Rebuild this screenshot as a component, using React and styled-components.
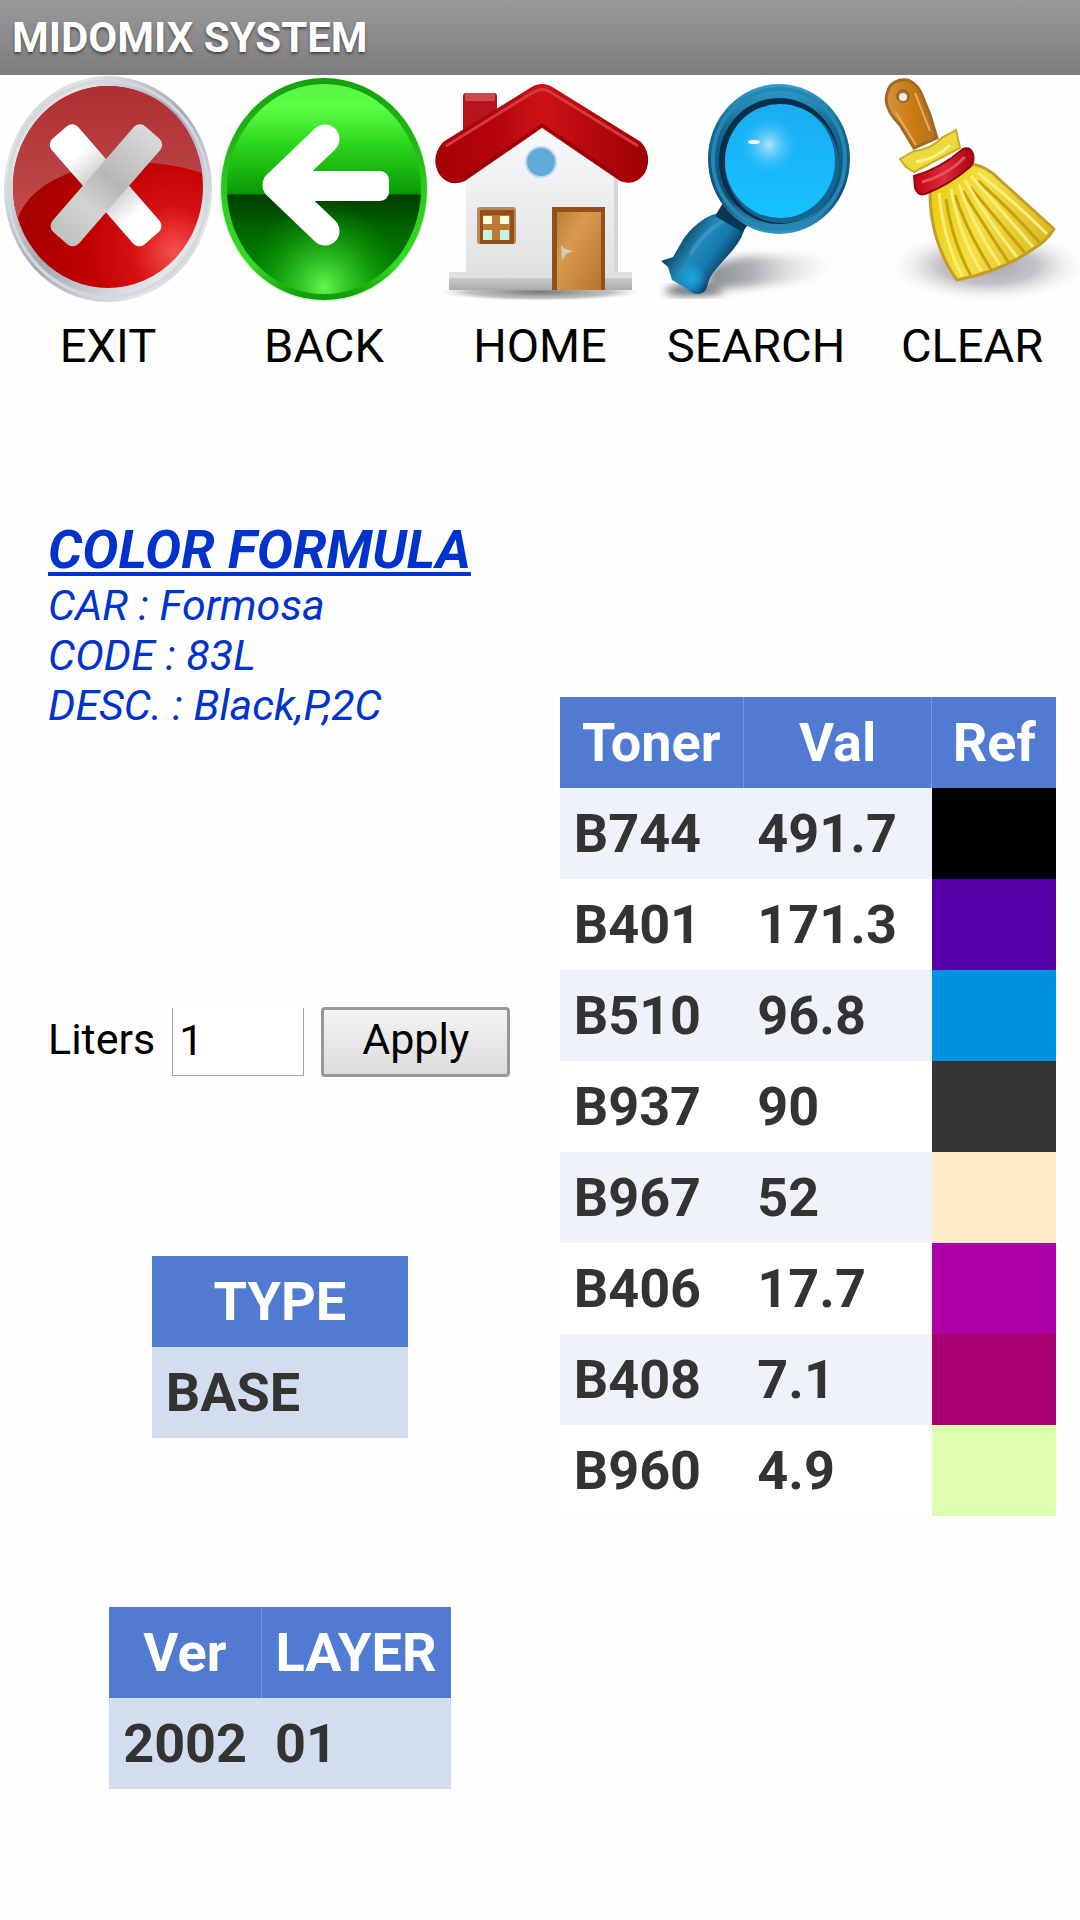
import React, { useState } from 'react';
import styled, { createGlobalStyle } from 'styled-components';

const GlobalStyle = createGlobalStyle`
  * {
    box-sizing: border-box;
  }

  body {
    margin: 0;
    background: #fefefe;
    color: #000;
    font-family: Roboto, sans-serif;
  }
`;

// Title bar
const TitleBar = styled.header`
  padding: 12px;
  background: linear-gradient(#9b999c, #7e7c7f);
`;

const Title = styled.h1`
  margin: 0;
  color: #fff;
  font-size: 42px;
  line-height: 51px;
  text-shadow: 0 2px 3px rgba(0, 0, 0, 0.5);
`;

// Toolbar with the five big icons
const Toolbar = styled.nav`
  display: grid;
  grid-template-columns: repeat(5, 1fr);
`;

const ToolButton = styled.button`
  display: flex;
  flex-direction: column;
  align-items: center;
  gap: 14px;
  padding: 0;
  border: 0;
  background: none;
  color: #000;
  font-family: inherit;
  font-size: 47px;
  line-height: 54px;
  cursor: pointer;
`;

const ToolIcon = styled.svg`
  display: block;
  width: 100%;
  height: auto;
`;

// Page body, details on the left and toners on the right
const Content = styled.main`
  display: flex;
  align-items: flex-start;
  padding: 146px 24px 131px 0;
`;

const Details = styled.div`
  flex: 1;
`;

const Formula = styled.section`
  padding-left: 48px;
  color: #0033cc;
  font-size: 43px;
  font-style: italic;
  line-height: 50px;
`;

const FormulaTitle = styled.h2`
  margin: 0;
  font-size: 54px;
  line-height: 61px;
  text-decoration: underline;
  text-decoration-thickness: 4px;
  text-underline-offset: 4px;
  text-decoration-skip-ink: none;
`;

const FormulaLine = styled.p`
  margin: 0;
`;

const LitersForm = styled.form`
  display: flex;
  align-items: center;
  margin-top: 277px;
  padding-left: 48px;
  font-size: 43px;
`;

const LitersLabel = styled.label`
  margin-right: 17px;
  padding-bottom: 6px;
  line-height: 50px;
`;

const LitersInput = styled.input`
  width: 132px;
  height: 68px;
  margin-right: 17px;
  padding: 0 6px 4px;
  border: 1px solid #a5a3a6;
  border-top: 0;
  border-radius: 0;
  background: #fff;
  color: #000;
  font-family: inherit;
  font-size: 43px;
  outline: 0;
`;

const ApplyButton = styled.button`
  width: 189px;
  height: 70px;
  padding: 0 0 6px;
  border: 3px solid #99979a;
  border-radius: 4px;
  background: linear-gradient(#f5f3f6, #dddbde);
  color: #000;
  font-family: inherit;
  font-size: 43px;
  cursor: pointer;
`;

// Shared table look
const Table = styled.table`
  width: ${(props) => props.$width};
  margin: ${(props) => props.$margin || '0'};
  border-collapse: collapse;
  color: #333;
  font-size: 54px;
  font-weight: bold;
  line-height: 63px;
`;

const HeadCell = styled.th`
  width: ${(props) => props.$width || 'auto'};
  padding: 14px;
  background: #517bd2;
  color: #fff;
  text-align: center;

  & + & {
    border-left: 1px solid #7496dd;
  }
`;

const Cell = styled.td`
  padding: 14px;
  background: ${(props) => props.$color};
`;

const toners = [
  { code: 'B744', val: '491.7', color: '#000000' },
  { code: 'B401', val: '171.3', color: '#5500aa' },
  { code: 'B510', val: '96.8', color: '#0090e0' },
  { code: 'B937', val: '90', color: '#363436' },
  { code: 'B967', val: '52', color: '#ffecc6' },
  { code: 'B406', val: '17.7', color: '#aa00a5' },
  { code: 'B408', val: '7.1', color: '#a80070' },
  { code: 'B960', val: '4.9', color: '#dcffb0' },
];

const ExitIcon = () => (
  <ToolIcon viewBox="0 0 216 230" aria-hidden="true">
    <defs>
      <linearGradient id="exitRim" x1="0" y1="0" x2="1" y2="1">
        <stop offset="0" stopColor="#b4bac2" />
        <stop offset="0.2" stopColor="#e4e6e6" />
        <stop offset="0.5" stopColor="#a3a9b3" />
        <stop offset="0.82" stopColor="#e4e6e8" />
        <stop offset="1" stopColor="#9fa5ad" />
      </linearGradient>
      <radialGradient id="exitRed" cx="0.85" cy="0.82" r="0.75">
        <stop offset="0" stopColor="#f55050" />
        <stop offset="0.3" stopColor="#d61010" />
        <stop offset="0.65" stopColor="#be0000" />
        <stop offset="1" stopColor="#a80000" />
      </radialGradient>
      <linearGradient id="exitGloss" x1="0" y1="0" x2="0" y2="1">
        <stop offset="0" stopColor="#ad2f33" />
        <stop offset="1" stopColor="#c24a4c" />
      </linearGradient>
      <linearGradient id="exitBar" x1="0" y1="0" x2="1" y2="0">
        <stop offset="0" stopColor="#fff" />
        <stop offset="0.2" stopColor="#fff" />
        <stop offset="0.4" stopColor="#d0d2d0" />
        <stop offset="0.6" stopColor="#d0d2d0" />
        <stop offset="0.8" stopColor="#fff" />
        <stop offset="1" stopColor="#fff" />
      </linearGradient>
      <linearGradient id="exitBarTop" x1="0" y1="0" x2="1" y2="0">
        <stop offset="0" stopColor="#bfc1bf" />
        <stop offset="0.3" stopColor="#d2d4d2" />
        <stop offset="0.55" stopColor="#b6b8b6" />
        <stop offset="1" stopColor="#d9dbd9" />
      </linearGradient>
    </defs>
    <ellipse cx="108" cy="114" rx="104" ry="113" fill="url(#exitRim)" />
    <ellipse cx="108" cy="114" rx="100" ry="108" fill="none" stroke="#d3d7de" strokeWidth="3" />
    <ellipse cx="108" cy="112" rx="95" ry="101" fill="url(#exitRed)" />
    <path d="M18 143 C28 114 66 91 120 88 C150 86 178 90 202 98 C195 45 156 11 108 11 C55 11 13 57 13 112 C13 125 15 135 18 143Z" fill="url(#exitGloss)" />
    <rect x="36" y="93" width="140" height="35" rx="8" fill="url(#exitBar)" transform="rotate(49 106 110)" />
    <rect x="36" y="93" width="140" height="35" rx="8" fill="url(#exitBarTop)" transform="rotate(-49 106 110)" />
  </ToolIcon>
);

const BackIcon = () => (
  <ToolIcon viewBox="0 0 216 230" aria-hidden="true">
    <defs>
      <linearGradient id="backGreen" x1="0" y1="0" x2="0" y2="1">
        <stop offset="0" stopColor="#55f442" />
        <stop offset="0.12" stopColor="#5dff48" />
        <stop offset="0.3" stopColor="#2bd51b" />
        <stop offset="0.52" stopColor="#0a9a05" />
        <stop offset="0.53" stopColor="#003d00" />
        <stop offset="0.68" stopColor="#006400" />
        <stop offset="1" stopColor="#009400" />
      </linearGradient>
      <linearGradient id="backRim" x1="0" y1="0" x2="0" y2="1">
        <stop offset="0" stopColor="#17a00d" />
        <stop offset="0.5" stopColor="#2cc91c" />
        <stop offset="0.85" stopColor="#35dc25" />
        <stop offset="1" stopColor="#109c08" />
      </linearGradient>
      <radialGradient id="backGlow" cx="0.5" cy="0.95" r="0.4">
        <stop offset="0" stopColor="#62f650" />
        <stop offset="0.5" stopColor="#2cc41e" stopOpacity="0.6" />
        <stop offset="1" stopColor="#009400" stopOpacity="0" />
      </radialGradient>
    </defs>
    <ellipse cx="108" cy="115" rx="104" ry="112" fill="#d9efd6" />
    <ellipse cx="108" cy="114" rx="102" ry="109" fill="url(#backGreen)" />
    <ellipse cx="108" cy="114" rx="102" ry="109" fill="url(#backGlow)" />
    <ellipse cx="108" cy="114" rx="100" ry="108" fill="none" stroke="url(#backRim)" strokeWidth="6" />
    <path d="M109 64 L61 110 L109 156" fill="none" stroke="#fff" strokeWidth="29" strokeLinecap="round" strokeLinejoin="round" />
    <rect x="60" y="96" width="113" height="30" rx="9" fill="#fff" />
  </ToolIcon>
);

const HomeIcon = () => (
  <ToolIcon viewBox="0 0 216 230" aria-hidden="true">
    <defs>
      <linearGradient id="homeRoof" x1="0" y1="0" x2="1" y2="0">
        <stop offset="0" stopColor="#a30006" />
        <stop offset="0.3" stopColor="#b5060c" />
        <stop offset="0.5" stopColor="#cf1216" />
        <stop offset="0.7" stopColor="#b90a0e" />
        <stop offset="1" stopColor="#9c0006" />
      </linearGradient>
      <linearGradient id="homeWall" x1="0" y1="0" x2="0" y2="1">
        <stop offset="0" stopColor="#fbfcfd" />
        <stop offset="1" stopColor="#e0e1e3" />
      </linearGradient>
      <linearGradient id="homeDoor" x1="0" y1="0" x2="1" y2="1">
        <stop offset="0" stopColor="#bd7e38" />
        <stop offset="0.35" stopColor="#d79a50" />
        <stop offset="1" stopColor="#b8742c" />
      </linearGradient>
      <linearGradient id="homeBase" x1="0" y1="0" x2="0" y2="1">
        <stop offset="0" stopColor="#d8dadb" />
        <stop offset="1" stopColor="#a9abac" />
      </linearGradient>
      <radialGradient id="homeShadow">
        <stop offset="0" stopColor="#777" />
        <stop offset="0.7" stopColor="#999" stopOpacity="0.6" />
        <stop offset="1" stopColor="#ccc" stopOpacity="0" />
      </radialGradient>
    </defs>
    <ellipse cx="108" cy="217" rx="102" ry="9" fill="url(#homeShadow)" />
    <path d="M34 86 L110 38 L186 86 V200 H34Z" fill="url(#homeWall)" />
    <path d="M182 102 H186 V198 H182Z" fill="#d5d6d9" />
    <rect x="17" y="197" width="183" height="18" fill="url(#homeBase)" />
    <rect x="17" y="197" width="183" height="6" fill="#dfe0e1" />
    <rect x="31" y="18" width="34" height="50" rx="3" fill="#b5151c" />
    <rect x="33" y="18" width="30" height="8" rx="2" fill="#cf4a4e" />
    <path d="M11 67 L98 13 Q110 5 122 13 L209 67 Q221 81 213 98 Q203 112 188 106 L110 53 L33 106 Q17 113 7 99 Q-2 82 11 67Z" fill="url(#homeRoof)" />
    <path d="M14 71 L100 18 Q110 11 120 18 L206 71" fill="none" stroke="#d33a3d" strokeWidth="3" />
    <path d="M33 103 L110 50 L188 103" fill="none" stroke="#95040a" strokeWidth="3" />
    <circle cx="109" cy="87" r="16" fill="#bcd9ec" />
    <circle cx="109" cy="87" r="14" fill="#62abd9" />
    <rect x="45" y="132" width="39" height="37" rx="3" fill="#b88a5a" />
    <rect x="48" y="135" width="34" height="34" fill="#935016" />
    <rect x="51" y="140" width="27" height="25" fill="#bd7a35" />
    <rect x="51" y="141" width="9" height="8" fill="#fffbdc" />
    <rect x="68" y="141" width="9" height="8" fill="#fffbdc" />
    <rect x="51" y="155" width="9" height="10" fill="#c6f2e4" />
    <rect x="68" y="155" width="9" height="10" fill="#c6f2e4" />
    <rect x="120" y="132" width="53" height="83" fill="#93501c" />
    <rect x="125" y="137" width="44" height="78" fill="url(#homeDoor)" />
    <path d="M129 170 L133 174 L141 176 L134 179 L130 185Z" fill="#d8cbbb" />
  </ToolIcon>
);

const SearchIcon = () => (
  <ToolIcon viewBox="0 0 216 230" aria-hidden="true">
    <defs>
      <linearGradient id="searchRim" x1="0" y1="0" x2="0" y2="1">
        <stop offset="0" stopColor="#2fa0cc" />
        <stop offset="0.3" stopColor="#16688f" />
        <stop offset="0.75" stopColor="#124f78" />
        <stop offset="1" stopColor="#3398c4" />
      </linearGradient>
      <linearGradient id="searchGlass" x1="0" y1="0" x2="0" y2="1">
        <stop offset="0" stopColor="#1badf2" />
        <stop offset="0.5" stopColor="#19b7fa" />
        <stop offset="1" stopColor="#16c2ff" />
      </linearGradient>
      <radialGradient id="searchShine">
        <stop offset="0" stopColor="#c4eaff" stopOpacity="0.9" />
        <stop offset="1" stopColor="#30bdfb" stopOpacity="0" />
      </radialGradient>
      <linearGradient id="searchHandle" gradientUnits="userSpaceOnUse" x1="34" y1="160" x2="80" y2="192">
        <stop offset="0" stopColor="#0b4868" />
        <stop offset="0.35" stopColor="#2389b8" />
        <stop offset="0.65" stopColor="#147ab0" />
        <stop offset="1" stopColor="#073450" />
      </linearGradient>
      <radialGradient id="searchTip">
        <stop offset="0" stopColor="#1ba9e2" />
        <stop offset="1" stopColor="#1ba9e2" stopOpacity="0" />
      </radialGradient>
      <linearGradient id="searchShadow" x1="0" y1="0" x2="1" y2="0">
        <stop offset="0" stopColor="#5f6468" />
        <stop offset="0.5" stopColor="#9a9da1" stopOpacity="0.8" />
        <stop offset="1" stopColor="#ddd" stopOpacity="0" />
      </linearGradient>
      <filter id="searchSoft" x="-20%" y="-50%" width="140%" height="200%">
        <feGaussianBlur stdDeviation="4" />
      </filter>
    </defs>
    <path d="M62 195 Q78 181 115 181 H182 Q196 192 168 203 Q110 213 60 214 L22 216 Q20 212 60 208Z" fill="url(#searchShadow)" filter="url(#searchSoft)" />
    <ellipse cx="46" cy="216" rx="30" ry="4" fill="#555b60" filter="url(#searchSoft)" />
    <path d="M72 138 L98 148 Q96 162 84 176 L68 194 Q61 202 59 212 Q57 219 50 219 Q43 219 38 213 L24 205 L20 192 L13 186 L25 182 L36 163 Q44 152 56 144 Q64 139 72 138Z" fill="url(#searchHandle)" />
    <ellipse cx="44" cy="203" rx="15" ry="16" fill="url(#searchTip)" />
    <path d="M43 178 Q56 156 76 146" fill="none" stroke="#49a6cf" strokeWidth="4" strokeLinecap="round" opacity="0.5" />
    <path d="M75 128 L101 149 L94 157 L67 141Z" fill="#0c3654" />
    <ellipse cx="131" cy="84" rx="71" ry="75" fill="url(#searchRim)" />
    <ellipse cx="131" cy="84" rx="66" ry="70" fill="none" stroke="#2587b4" strokeWidth="4" />
    <ellipse cx="131" cy="86" rx="60" ry="63" fill="#092f4c" />
    <ellipse cx="134" cy="89" rx="57" ry="59" fill="#16678f" />
    <ellipse cx="132" cy="86" rx="55" ry="57" fill="url(#searchGlass)" />
    <circle cx="121" cy="70" r="29" fill="url(#searchShine)" />
    <ellipse cx="106" cy="67" rx="6" ry="2" fill="#f3fbff" />
  </ToolIcon>
);

const ClearIcon = () => (
  <ToolIcon viewBox="0 0 216 230" aria-hidden="true">
    <defs>
      <radialGradient id="clearShadow">
        <stop offset="0" stopColor="#a3a3a9" />
        <stop offset="0.5" stopColor="#b9b9be" stopOpacity="0.85" />
        <stop offset="1" stopColor="#eee" stopOpacity="0" />
      </radialGradient>
      <linearGradient id="clearBristle" x1="0" y1="0.4" x2="1" y2="0.6">
        <stop offset="0" stopColor="#e9d014" />
        <stop offset="0.4" stopColor="#f2e040" />
        <stop offset="1" stopColor="#dab628" />
      </linearGradient>
      <linearGradient id="clearHandle" x1="0" y1="0.4" x2="1" y2="0.2">
        <stop offset="0" stopColor="#d7943c" />
        <stop offset="0.5" stopColor="#c97a12" />
        <stop offset="1" stopColor="#a8702c" />
      </linearGradient>
      <linearGradient id="clearBand" x1="0" y1="0" x2="1" y2="0">
        <stop offset="0" stopColor="#c20010" />
        <stop offset="0.5" stopColor="#dc2c38" />
        <stop offset="1" stopColor="#a90010" />
      </linearGradient>
    </defs>
    <ellipse cx="124" cy="191" rx="98" ry="36" fill="url(#clearShadow)" />
    <path d="M22 25 Q23 11 31 7 Q39 3 46 6 Q54 10 58 20 L66 40 L73 63 L50 73 L36 50 Q23 37 22 25Z" fill="url(#clearHandle)" stroke="#a16a24" strokeWidth="3" />
    <path d="M32 38 L52 70 M51 18 L66 56" stroke="#e3ad5e" strokeWidth="2" fill="none" />
    <circle cx="39" cy="21" r="7" fill="#9b6a2c" />
    <circle cx="39" cy="22" r="4" fill="#f3ede2" />
    <path d="M36 84 L50 76 Q66 75 79 62 L92 55 L96 73 L50 97 L42 92Z" fill="#ecda3a" stroke="#c9a928" strokeWidth="2" />
    <path d="M52 87 Q72 84 86 70" fill="none" stroke="#faf189" strokeWidth="3" />
    <path d="M66 116 L108 89 Q124 92 136 105 L190 154 Q183 166 169 174 Q138 196 93 205 Q84 193 78 178 Q66 151 66 116Z" fill="url(#clearBristle)" stroke="#c59d25" strokeWidth="3" strokeLinejoin="round" />
    <path d="M82 124 Q88 166 107 201 M91 120 Q103 157 128 196 M99 116 Q119 149 145 188 M106 112 Q131 142 161 178 M114 106 Q144 132 176 168" fill="none" stroke="#c9a014" strokeWidth="3" />
    <path d="M75 118 Q79 164 98 201 M87 114 Q95 160 117 196 M95 110 Q110 153 136 190 M101 105 Q124 146 153 182 M107 101 Q138 136 169 172 M114 98 Q150 126 183 159" fill="none" stroke="#f8ec7c" strokeWidth="3" />
    <path d="M50 101 Q76 94 99 74 Q106 71 109 79 Q111 87 106 92 Q85 110 61 119 Q54 121 51 113Z" fill="url(#clearBand)" stroke="#930713" strokeWidth="2" />
    <path d="M58 107 Q82 101 101 82" fill="none" stroke="#e2525d" strokeWidth="3" />
  </ToolIcon>
);

const tools = [
  { label: 'EXIT', Icon: ExitIcon },
  { label: 'BACK', Icon: BackIcon },
  { label: 'HOME', Icon: HomeIcon },
  { label: 'SEARCH', Icon: SearchIcon },
  { label: 'CLEAR', Icon: ClearIcon },
];

// Table with the toners of the formula
const TonerTable = () => (
  <Table $width="47%" $margin="178px 0 0">
    <thead>
      <tr>
        <HeadCell $width="37%">Toner</HeadCell>
        <HeadCell $width="38%">Val</HeadCell>
        <HeadCell>Ref</HeadCell>
      </tr>
    </thead>
    <tbody>
      {toners.map((toner, index) => {
        const stripe = index % 2 === 0 ? '#eff2fb' : '#ffffff';
        return (
          <tr key={toner.code}>
            <Cell $color={stripe}>{toner.code}</Cell>
            <Cell $color={stripe}>{toner.val}</Cell>
            <Cell $color={toner.color} />
          </tr>
        );
      })}
    </tbody>
  </Table>
);

const Liters = () => {
  const [liters, setLiters] = useState('1');

  return (
    <LitersForm onSubmit={(e) => e.preventDefault()}>
      <LitersLabel htmlFor="liters">Liters</LitersLabel>
      <LitersInput id="liters" value={liters} onChange={(e) => setLiters(e.target.value)} />
      <ApplyButton type="submit">Apply</ApplyButton>
    </LitersForm>
  );
};

const App = () => (
  <>
    <GlobalStyle />
    <TitleBar>
      <Title>MIDOMIX SYSTEM</Title>
    </TitleBar>
    <Toolbar>
      {tools.map(({ label, Icon }) => (
        <ToolButton key={label} type="button">
          <Icon />
          {label}
        </ToolButton>
      ))}
    </Toolbar>
    <Content>
      <Details>
        <Formula>
          <FormulaTitle>COLOR FORMULA</FormulaTitle>
          <FormulaLine>CAR : Formosa</FormulaLine>
          <FormulaLine>CODE : 83L</FormulaLine>
          <FormulaLine>DESC. : Black,P,2C</FormulaLine>
        </Formula>
        <Liters />
        <Table $width="256px" $margin="179px auto 0">
          <thead>
            <tr>
              <HeadCell>TYPE</HeadCell>
            </tr>
          </thead>
          <tbody>
            <tr>
              <Cell $color="#d2ddf0">BASE</Cell>
            </tr>
          </tbody>
        </Table>
        <Table $width="341px" $margin="169px auto 0">
          <thead>
            <tr>
              <HeadCell>Ver</HeadCell>
              <HeadCell>LAYER</HeadCell>
            </tr>
          </thead>
          <tbody>
            <tr>
              <Cell $color="#d2ddf0">2002</Cell>
              <Cell $color="#d2ddf0">01</Cell>
            </tr>
          </tbody>
        </Table>
      </Details>
      <TonerTable />
    </Content>
  </>
);

export default App;
